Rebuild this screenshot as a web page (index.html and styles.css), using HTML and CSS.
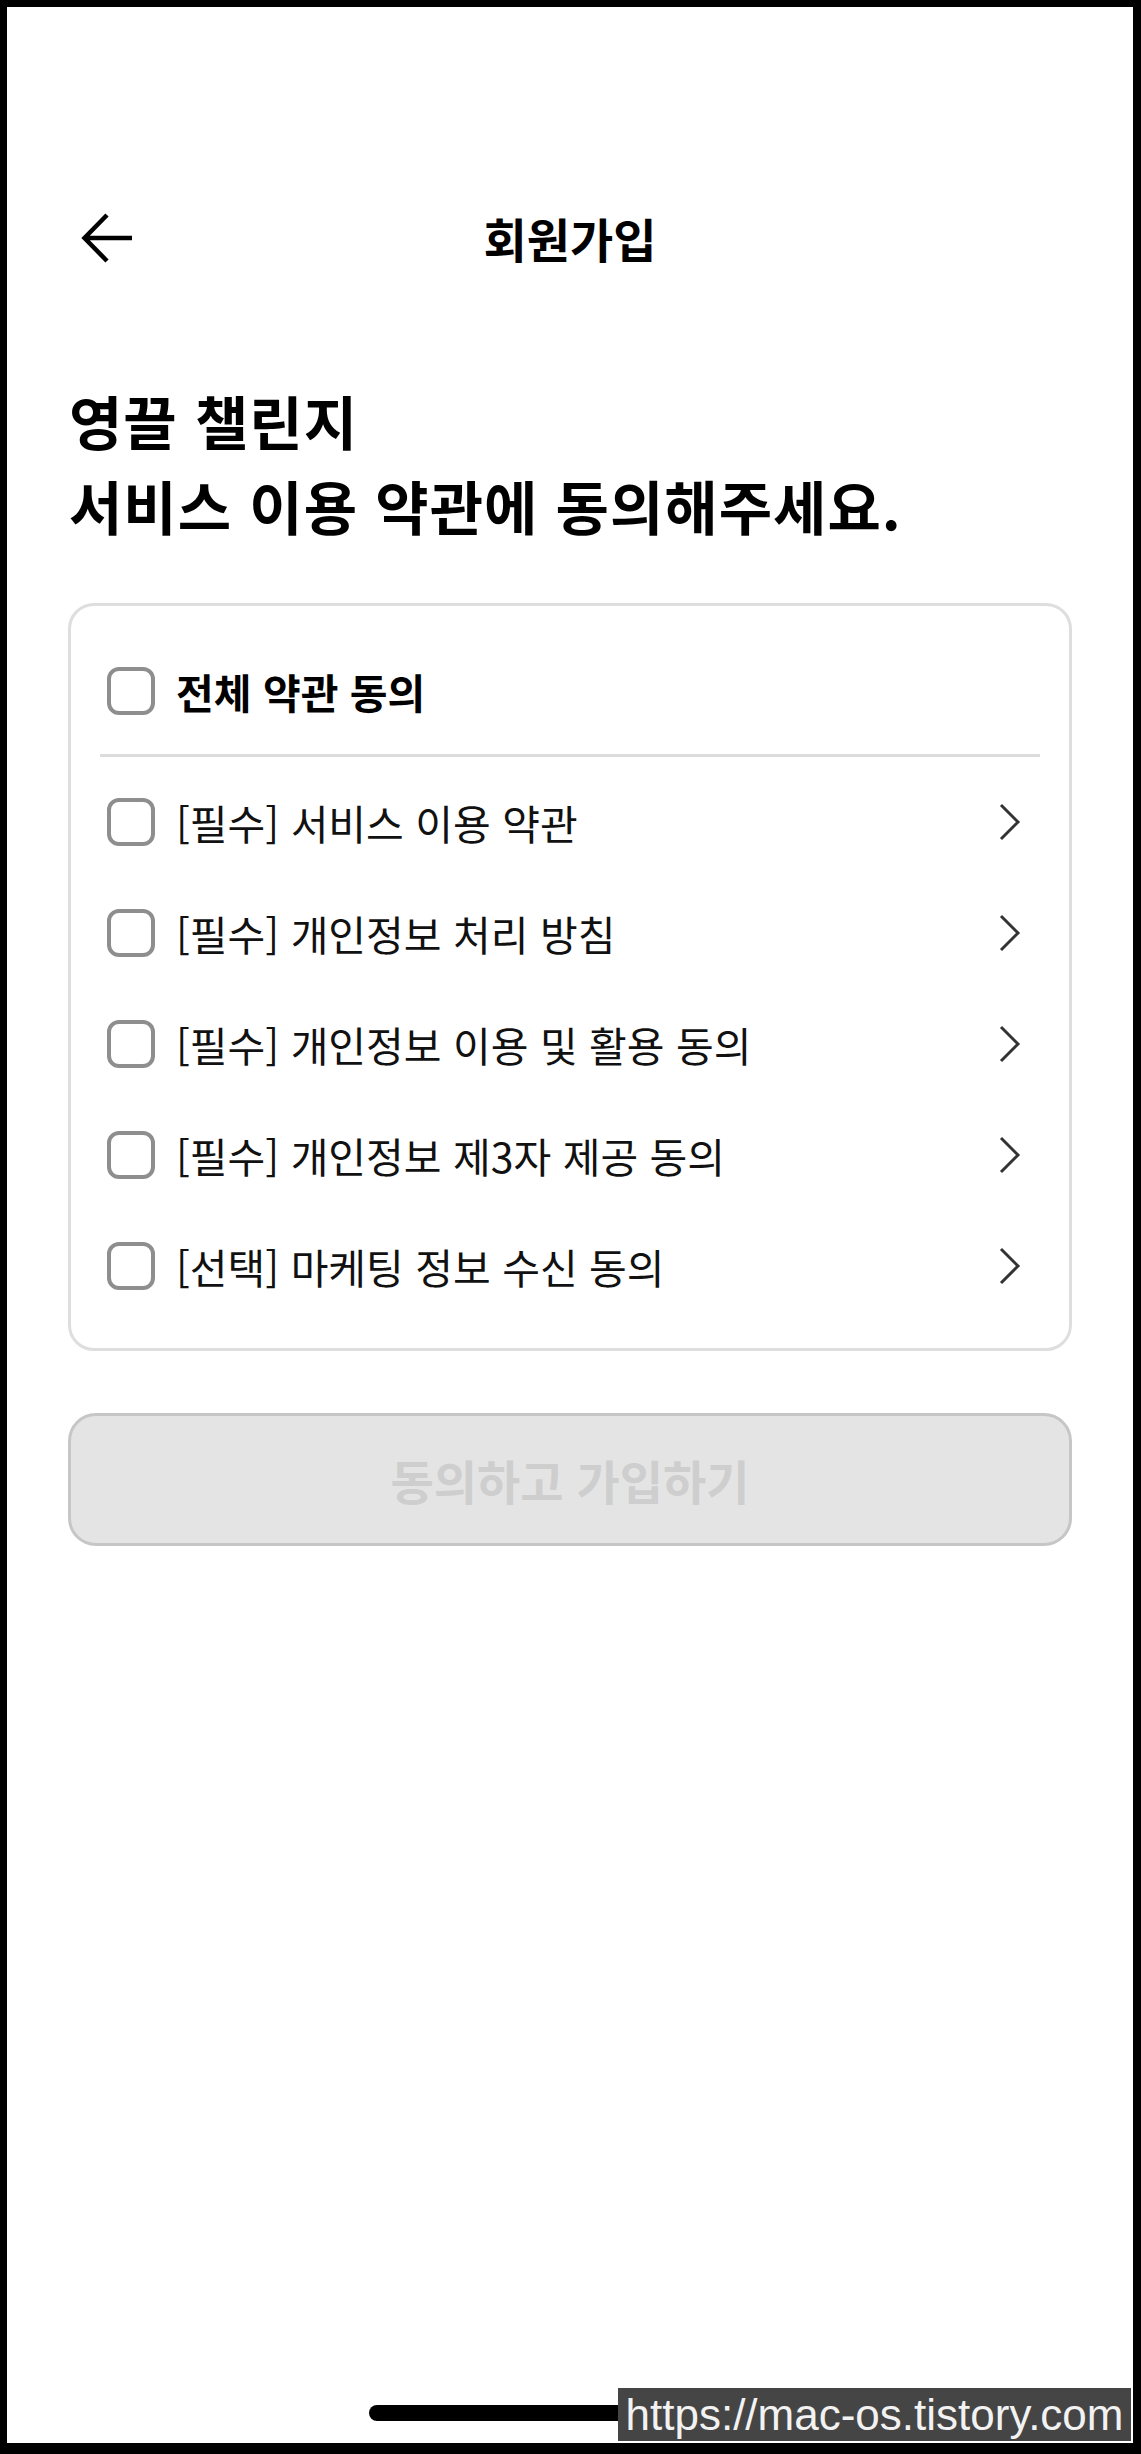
FILE: index.html
```html
<!DOCTYPE html>
<html lang="ko">
<head>
  <meta charset="UTF-8">
  <meta name="viewport" content="width=device-width, initial-scale=1.0">
  <title>회원가입</title>
  <link rel="stylesheet" href="styles.css">
</head>
<body>
  <div class="phone">
    <header class="topbar">
      <button class="back" aria-label="뒤로">
        <svg width="54" height="54" viewBox="0 0 54 54" fill="none" stroke="#000" stroke-width="4.5">
          <path d="M52 27H5M27 4L4.5 27L27 50"/>
        </svg>
      </button>
      <h1 class="topbar-title">회원가입</h1>
      <span class="topbar-spacer"></span>
    </header>

    <main class="content">
      <h2 class="headline">영끌 챌린지<br>서비스 이용 약관에 동의해주세요.</h2>

      <div class="terms">
        <div class="term term-all">
          <span class="check"></span>
          <span class="term-label">전체 약관 동의</span>
        </div>
        <div class="divider"></div>
        <div class="term">
          <span class="check"></span>
          <span class="term-label">[필수] 서비스 이용 약관</span>
          <svg class="chevron" width="24" height="38" viewBox="0 0 24 38" fill="none" stroke="#333" stroke-width="3"><path d="M3 2L20 19L3 36"/></svg>
        </div>
        <div class="term">
          <span class="check"></span>
          <span class="term-label">[필수] 개인정보 처리 방침</span>
          <svg class="chevron" width="24" height="38" viewBox="0 0 24 38" fill="none" stroke="#333" stroke-width="3"><path d="M3 2L20 19L3 36"/></svg>
        </div>
        <div class="term">
          <span class="check"></span>
          <span class="term-label">[필수] 개인정보 이용 및 활용 동의</span>
          <svg class="chevron" width="24" height="38" viewBox="0 0 24 38" fill="none" stroke="#333" stroke-width="3"><path d="M3 2L20 19L3 36"/></svg>
        </div>
        <div class="term">
          <span class="check"></span>
          <span class="term-label">[필수] 개인정보 제3자 제공 동의</span>
          <svg class="chevron" width="24" height="38" viewBox="0 0 24 38" fill="none" stroke="#333" stroke-width="3"><path d="M3 2L20 19L3 36"/></svg>
        </div>
        <div class="term">
          <span class="check"></span>
          <span class="term-label">[선택] 마케팅 정보 수신 동의</span>
          <svg class="chevron" width="24" height="38" viewBox="0 0 24 38" fill="none" stroke="#333" stroke-width="3"><path d="M3 2L20 19L3 36"/></svg>
        </div>
      </div>

      <button class="submit" disabled>동의하고 가입하기</button>
    </main>

    <div class="home-bar"></div>
    <div class="watermark">https://mac-os.tistory.com</div>
  </div>
</body>
</html>
```

FILE: styles.css
```css
body {
  margin: 0;
  padding: 0;
  background: #000;
  font-family: "Noto Sans CJK KR", "Noto Sans", sans-serif;
  color: #000;
}
.phone {
  position: relative;
  display: flex;
  flex-direction: column;
  height: 2436px;
  margin: 7px 8px 11px 7px;
  background: #fff;
  overflow: hidden;
}
.topbar {
  display: flex;
  align-items: center;
  height: 76px;
  margin-top: 193px;
  padding: 0 73px;
}
.back {
  width: 54px;
  height: 54px;
  padding: 0;
  border: none;
  background: none;
  display: flex;
  align-items: center;
}
.topbar-title {
  flex: 1;
  margin: 0;
  text-align: center;
  font-size: 47px;
  font-weight: 700;
  line-height: 76px;
}
.topbar-spacer {
  width: 54px;
}
.content {
  padding: 0 61px;
}
.headline {
  margin: 102px 0 55px;
  font-size: 58px;
  font-weight: 700;
  line-height: 85px;
  letter-spacing: 1px;
  padding-left: 1px;
}
.terms {
  border: 3px solid #dedede;
  border-radius: 26px;
  padding: 29px 29px 27px;
}
.term {
  display: flex;
  align-items: center;
  height: 111px;
  padding: 0 18px 0 7px;
}
.term-all {
  height: 112px;
}
.check {
  flex: none;
  width: 48px;
  height: 48px;
  box-sizing: border-box;
  border: 4px solid #8e8e8e;
  border-radius: 12px;
  margin-right: 21px;
}
.term-label {
  flex: 1;
  font-size: 41px;
  color: #111;
}
.term-all .term-label {
  font-size: 41px;
  font-weight: 700;
  color: #000;
}
.divider {
  height: 3px;
  margin: 7px 0 9px;
  background: #dcdcdc;
}
.submit {
  display: block;
  width: 100%;
  height: 133px;
  margin-top: 62px;
  border: 3px solid #c6c6c6;
  border-radius: 28px;
  background: #e4e4e4;
  color: #cecece;
  font-family: "Noto Sans CJK KR", "Noto Sans", sans-serif;
  font-size: 47px;
  font-weight: 700;
}
.home-bar {
  align-self: center;
  width: 402px;
  height: 16px;
  margin-top: auto;
  margin-bottom: 22px;
  border-radius: 8px;
  background: #000;
}
.watermark {
  position: absolute;
  right: 2px;
  bottom: 2px;
  width: 513px;
  height: 53px;
  background: #454545;
  color: #f2f2f2;
  font-family: "Liberation Sans", Arial, sans-serif;
  font-size: 44px;
  line-height: 53px;
  text-align: center;
}
```
